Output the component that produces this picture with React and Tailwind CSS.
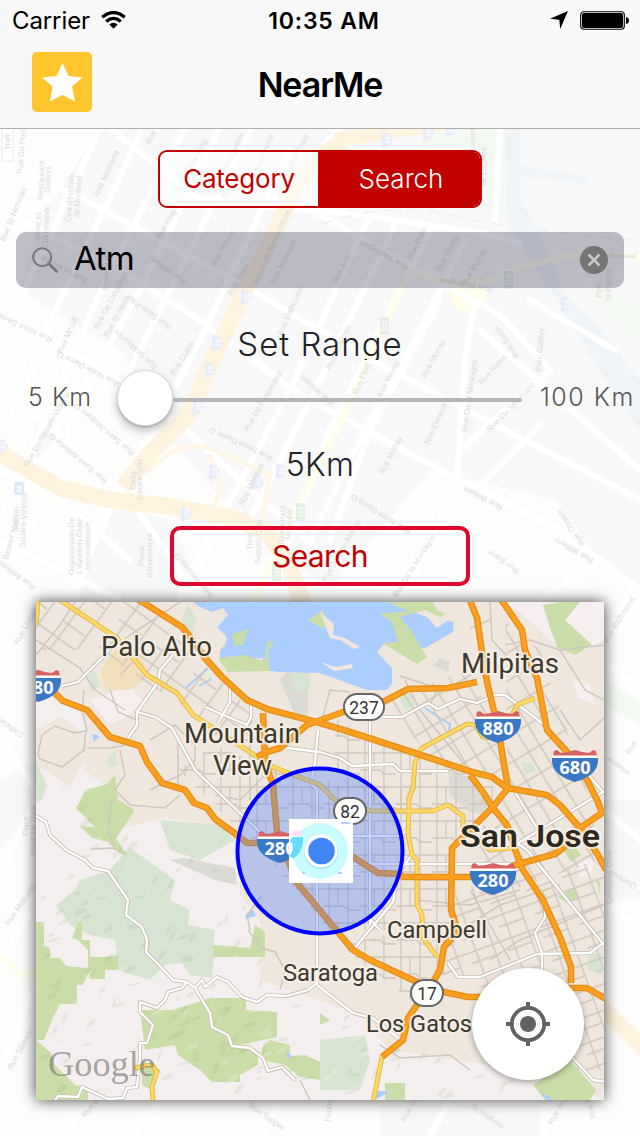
import React, { useState } from 'react';

// small seeded generator, keeps the terrain the same on every render
const makeRandom = (seed) => () => {
    seed = (seed * 16807) % 2147483647;
    return seed / 2147483647;
};

const backdropLabels = [
    [22, 174, -85, 'Rue Du Port'], [98, 197, -65, 'Rue Normand'], [150, 145, -65, 'Rue'], [192, 170, -62, 'Rue King'],
    [226, 172, -64, 'Rue Queen'], [258, 172, -66, 'Rue Prince'], [293, 168, -64, 'Rue Duke'], [5, 242, -68, 'Rue St-Nicholas'],
    [43, 200, -88, 'Restaurant'], [50, 193, -88, 'Galleys'], [71, 222, -86, "Cire d'histoire"], [79, 218, -86, 'de Montréal'],
    [40, 240, -88, 'Olive et'], [48, 247, -88, 'Gourmando'], [108, 290, -88, 'Federal Bar'],
    [160, 240, -60, 'Rue King'], [215, 267, -60, 'Rue Prince'], [257, 286, -66, 'Autoroute Bonaventure'], [274, 285, -62, 'Rue Nazareth'],
    [232, 296, -60, 'Rue Duke'], [88, 279, 208, 'Rue Le Moyne'], [187, 281, 216, 'Rue William'], [228, 192, 186, 'Rue Wellington'],
    [337, 284, -64, 'Rue Ann'], [412, 260, -64, 'Rue Peel'], [440, 272, -62, 'Rue Young'], [466, 286, -60, 'Rue Murray'],
    [409, 265, 208, 'Rue Wellington'], [493, 287, 190, 'Rue Wellington'], [637, 254, 180, 'Wellington'],
    [601, 298, -90, 'Parc'], [611, 302, -90, 'St-Patrick'], [486, 186, -90, 'de Lachine'], [475, 152, -90, 'Canada'],
    [53, 338, 205, 'Rue Notre Dame'], [62, 354, -66, 'Rue McGill'], [98, 330, -62, 'Rue De Longueuil'], [108, 338, -62, 'Rue St-Henri'],
    [158, 366, 222, 'Rue St-Maurice'], [174, 376, -58, 'Rue Dupré'], [172, 326, 216, 'Rue Saint-Paul'], [120, 382, 207, 'Rue Notre Dame O'],
    [135, 452, 220, 'Rue Saint-Jacques O'], [28, 467, -60, 'Rue Du Square-Victoria'], [108, 480, 220, 'Rue Saint-Antoine O'],
    [135, 490, -86, 'Delta'], [142, 500, -90, 'Centre-Ville'], [248, 432, -60, "Rue De l'Inspecteur"], [273, 456, 205, 'Rue Notre Dame O'],
    [282, 336, -66, 'Rue Dalhousie'], [335, 402, 220, 'Rue William'], [243, 506, -62, 'Rue Montfort'], [18, 532, -88, 'Station'],
    [25, 548, -88, 'Square-Victoria'], [74, 575, -90, 'Organisation De'], [82, 574, -90, "L'Aviation Civile"], [90, 570, -90, 'Internationale'],
    [144, 566, -90, 'Place'], [152, 578, -90, 'Bonaventure'], [36, 586, 216, 'Rue Belmont'], [8, 560, -75, 'Beaver Hall'],
    [252, 550, -88, 'Time'], [260, 564, -88, 'Supper Club'], [284, 545, -88, 'Restaurant'], [291, 540, -88, 'Montréal'],
    [326, 582, -60, 'Rue Jeanne-Mance'], [330, 370, -64, 'Rue Shannon'], [357, 395, -66, 'Rue Peel'], [382, 398, -64, 'Rue Young'],
    [426, 378, -62, 'Rue Murray'], [482, 385, -48, 'Rue Rioux'], [519, 356, 236, 'Rue Basin'], [541, 372, -86, 'Parc Gallery'],
    [467, 432, -82, 'Rue De la Montagne'], [490, 432, -46, 'Rue Du Séminaire'], [429, 445, -66, 'Rue Eleanor'], [383, 475, -62, 'Rue Murray'],
    [503, 506, 208, 'Rue William'], [585, 544, 235, 'Rue Ottawa'], [594, 559, 210, 'Rue William'], [520, 570, 215, 'Rue Barré'],
    [411, 530, 212, 'Rue Notre Dame O'], [397, 598, -58, 'Rue De la Montagne'], [214, 596, 230, 'Saint-Antoine O'],
    [18, 645, -60, 'Rue University'], [24, 734, 215, 'Cathcart'], [28, 836, -90, 'Place'], [35, 856, -90, 'Montréal Trust'],
    [9, 926, -56, 'Rue Metcalfe'], [12, 1070, -62, 'Rue Stanley'], [43, 1100, -60, 'Rue Drummond'], [85, 1118, -50, 'Rue de la Montagne'],
    [607, 644, -58, 'Rue Richmond'], [630, 755, -60, 'Rue'], [606, 760, 35, 'Avenue'], [612, 904, -90, 'Campbell Clive'],
    [637, 885, 210, 'Quesnel'], [248, 1107, 35, 'Rue Tupper'], [330, 1122, -84, 'Faubourg'], [405, 1122, -60, 'Rue Guy'],
    [470, 1107, 35, 'St-Mathieu'], [552, 1125, -60, 'Rue Seymour'], [596, 1118, -105, 'Rue René-Lévesque'],
];

const backdropBadges = [
    [387, 140, '10'], [428, 133, '10'], [451, 129, '10'], [283, 188, '10'], [246, 297, '10'], [217, 343, '10'], [210, 370, '10'],
    [198, 407, '10'], [214, 472, '10'], [257, 482, '10'], [281, 471, '10'], [186, 514, '720'], [566, 304, '10'], [2, 446, '10'],
];

const Backdrop = () => (
    <svg className="absolute inset-0 h-full w-full" viewBox="0 0 640 1136" fontFamily="Liberation Sans, sans-serif">
        <rect width="640" height="1136" fill="#fdfdfb" />
        <g fill="#f8f8f8">
            <path d="M100 128L340 128L520 128H640V590L600 560L555 500L430 470L330 590L240 520L170 440L120 350L20 290L40 220Z" />
            <path d="M116 505L170 520L190 560L175 600H80L90 560Z" />
            <path d="M0 780L36 760V820L0 850ZM604 800H640V900H604ZM380 1105H540V1136H380Z" />
        </g>
        <path d="M420 147L443 128H505L508 218L483 213V147ZM515 325L553 365L540 375L520 345ZM580 270L640 310V350L600 310ZM36 420L50 410L55 440L36 460ZM604 680L640 700V725L604 705Z" fill="#f5f9f3" />
        <path d="M505 128H520V165L587 176V184L520 176V200L532 217L568 300L593 320L640 380V430L593 360L557 300L508 227Z" fill="#eff4f8" />
        <circle cx="468" cy="294" r="18" fill="#fefeea" />

        {/* city streets */}
        <g fill="none" stroke="#ffffff" strokeWidth="6" strokeLinejoin="round" strokeLinecap="round">
            <path d="M0 160L75 195L225 275L390 370L640 500" />
            <path d="M110 128L200 200L360 215L480 233L520 243" />
            <path d="M320 215L500 315L550 370L460 450" />
            <path d="M0 210L120 270L200 320L300 395L450 475L560 530L640 590" />
            <path d="M0 315L110 375L180 425L240 480L330 560L400 600" />
            <path d="M0 390L60 435L130 500L200 600M0 470L60 500L130 560" />
            <path d="M640 470L480 330M540 425L480 485M475 300L465 360L457 480L440 520L400 600" />
            <path d="M100 128L20 300L0 340M140 135L60 300L10 420M185 128L110 270L40 430L0 520" />
            <path d="M220 128L145 280L85 390L15 560M252 128L190 250L115 400M290 150L195 350L100 530L70 600" />
            <path d="M370 215L285 400L230 500L180 600M395 225L330 360L260 500L210 600" />
            <path d="M430 230L380 330L330 430L270 590M465 240L420 330L370 420L320 520L280 600" />
            <path d="M340 128L320 150M440 300L370 430L330 540M500 128L495 220M530 300L615 350" />
            <path d="M0 540L60 570L120 600M540 600L600 560M0 740L36 790M36 800L0 870M0 960L40 900M0 1080L36 980M604 640L640 600M604 660L640 690M604 810L640 840M604 900L640 930" />
            <path d="M60 1136L90 1100M130 1136L160 1100M260 1136L280 1100M430 1136L450 1100M540 1136L560 1100M0 1136L40 1090" />
        </g>
        <g fill="none" stroke="#fef3df" strokeWidth="17" strokeLinejoin="round">
            <path d="M335 140L443 124" strokeWidth="14" />
            <path d="M345 142Q315 155 295 187L277 227L240 300L217 350L187 417L147 457L123 487" />
            <path d="M-5 450L20 465L60 488L110 500L173 507L233 518L267 532L290 567L305 610" />
            <path d="M600 1005L650 1055" />
        </g>
        <g fill="none" stroke="#fef7e8" strokeWidth="5">
            <path d="M145 475Q180 435 215 450L270 475L262 520M210 455L220 490L212 515" />
        </g>
        <g fill="none" stroke="#fefeec" strokeWidth="6">
            <path d="M640 257L580 253L520 267L467 290L410 270L370 357L340 423L315 470L250 610M0 955L22 975L40 970" />
        </g>
        <path d="M320 225Q390 200 450 215T640 240" fill="none" stroke="#f0f0f0" strokeWidth="2" strokeDasharray="12 10" />
        <rect x="2" y="118" width="11" height="43" fill="#fff" stroke="#ececec" />
        <text transform="translate(10 150) rotate(-90)" fontSize="8" fill="#d6d6d6">Trafi</text>

        {backdropBadges.map(([x, y, label], index) => (
            <g key={index} transform={`translate(${x} ${y}) rotate(-88)`}>
                <path d="M-8 -5H8L6 2L0 6L-6 2Z" fill="#e9edfa" />
                <text textAnchor="middle" y="3" fontSize="7" fontWeight="bold" fill="#fff">{label}</text>
            </g>
        ))}
        {[[508, 280], [384, 326], [300, 512], [276, 572]].map(([x, y]) => (
            <g key={x} transform={`translate(${x} ${y}) rotate(-90)`}>
                <rect x="-9" y="-4" width="18" height="9" fill="#e4f0e4" />
                <text textAnchor="middle" y="3" fontSize="7" fontWeight="bold" fill="#fff">112</text>
            </g>
        ))}
        <rect x="14" y="482" width="10" height="13" rx="2" fill="#dfeaf7" />
        <text transform="translate(22 492) rotate(-90)" fontSize="8" fontWeight="bold" fill="#fff">M</text>
        {backdropLabels.map(([x, y, angle, label], index) => (
            <text key={index} transform={`translate(${x} ${y}) rotate(${angle})`} fontSize="8" fill="#dcdcdc">{label}</text>
        ))}
    </svg>
);

const highways = [
    'M136 598L182 627L190 637L205 658L222 677L247 700L267 709L320 723L350 732L430 758L472 772L492 777L507 788L547 795L560 805L580 828L598 855L606 870',
    'M55 693L63 701L87 710L110 737L140 746L147 762L162 783L185 790L194 803L207 808L215 819L237 835L247 843H300L353 857L378 873L400 874L403 877H492L515 865L555 854L563 848L580 828L602 813L598 802L587 780L567 752L547 730L537 678L525 650L522 630L500 598',
    'M263 713L265 762L273 785L277 832L297 883L342 937L353 950L370 960L417 982L444 992L468 997H500L572 988H587L606 999',
    'M257 757L267 752L280 748L307 725L343 712L383 702L408 689L448 688L477 682',
    'M469 598L477 618L482 652L487 682L498 728L508 788L493 807L472 828L452 848L451 910L456 925V933L444 947L440 970L433 982L408 1018L403 1040L382 1057',
    'M470 775L483 792L493 808L507 825L517 855L523 870L543 900L560 937L571 967V983',
];

const mainRoads = [
    'M57 598L117 638L147 675L177 693L193 715L273 767L320 785L337 802L372 811H433L448 805L463 816V828L490 850L512 848',
    'M535 698L517 705L512 715L498 738L483 737L475 725L467 724L422 748L415 762L413 788L409 798L408 835L412 855L417 860V905L422 915L423 938L437 957',
    'M38 598L36 625',
    'M382 1057L373 1102',
    'M135 1068L152 1065L157 1072L152 1087L153 1102',
];

const whiteRoads = [
    'M62 686L78 682L105 655L112 645',
    'M173 655L160 670L158 682L137 712V725L128 738',
    'M137 712L155 717L172 728L195 770L242 815L260 832',
    'M205 707L247 725L251 717V697M230 683V702L218 723',
    'M36 816L46 822L50 835L66 850L85 860L93 868L108 871L128 900L126 915L142 927L147 940L146 952L157 963L173 980L187 982L195 988L210 1013L212 1027L228 1035L232 1046L250 1048L263 1058L268 1071L282 1067L295 1080',
    'M195 988L202 980L205 987L217 977L228 982L242 997L257 1002L267 995L287 996L308 990L317 983V790L311 783L315 762L318 730',
    'M187 982L182 988L168 992L165 1000L157 1008L140 1002V1012L153 1025L147 1043H140V1057L137 1087L127 1088L123 1098L108 1099L82 1087L78 1097L58 1096L54 1102',
    'M287 748L320 752L340 758L352 766L393 764L400 771H448',
    'M383 717H402L428 703L438 709L460 699L477 703L495 695H505L542 723L563 745L603 792L518 843',
    'M370 717V925M515 792L537 828M517 843L527 850L604 945M403 864H513M317 836H400L412 826M335 864H403',
    'M448 963L458 977H480L537 954L590 953L606 941',
    'M317 985L353 1013L373 1018L398 1038',
    'M353 950L393 902L398 873L412 855M368 917L380 930',
    'M573 1058L593 1080L606 1082',
    'M540 890L545 900V917L535 933L542 953V975',
];

// [polygon, pattern]: areas covered by a regular street grid
const streetGrids = [
    ['M36 602H140L250 710L262 760L215 735L175 700L140 680L100 650L36 650Z', 'streets-slant'],
    ['M178 770L215 745L275 770L320 780L410 790V930L330 930L270 860L240 830Z', 'streets-square'],
    ['M335 720L430 758L500 790L455 850V945L410 1000L340 945L410 930V815L335 790Z', 'streets-square'],
    ['M380 700L470 670L500 740L505 780L430 755Z', 'streets-steep'],
    ['M505 620L540 650L590 800L600 860L480 900L480 830L508 790Z', 'streets-steep'],
    ['M455 890L604 860V1070H560L470 975H440Z', 'streets-slant-dense'],
];

const terrainGreens = [
    'M78 805L85 790L105 785L115 775L118 800L135 810L115 840L108 830L100 833L88 820L76 808Z',
    'M80 826L95 827L102 820L115 824L117 840L128 857L118 852L108 842L92 838Z',
    'M36 922H44V946L50 948V958H60L66 966L88 968V950L78 940L72 938L78 922H82V940H90V957H105L118 955V970H105V979H90V972L82 985H77V1004H60L52 1020L44 1040L36 1040Z',
    'M213 945L250 948L255 925L265 932V957H213Z',
    'M140 1010L172 1010L195 1003L210 998H246V1010L277 1012V1037L240 1045L258 1052V1065L240 1075V1082H212L200 1070L178 1055L175 1045L145 1050Z',
    'M262 1048L270 1040L290 1045V1056L305 1055L320 1062V1080L300 1077L285 1065L262 1060Z',
    'M36 1040L50 1052L55 1065L75 1085L88 1087V1100H36Z', 'M142 1060L160 1070L152 1090L142 1085Z',
    'M543 605L560 602H580L565 620L592 645L575 655L558 648L550 628Z', 'M562 848L572 842L581 855L571 862Z',
    'M558 897L575 887L580 898L568 903Z M593 877L600 882V895L598 885Z',
    'M533 1085L570 1060L596 1090L590 1100H545Z', 'M320 1013L330 1020L320 1025ZM385 1083H405V1100H385Z',
];

const paleGreens = [
    'M188 604L197 620L190 640L182 620ZM87 677L95 670L100 685L92 693ZM107 760L115 750L117 765L110 768Z',
    'M56 905L75 890L80 880L108 871L130 848L175 880L170 900L190 910L188 925L215 930L212 960L165 965L150 980L118 970L115 940L90 935L70 925Z',
    'M36 762L47 785L42 800L36 803ZM160 820L220 825L235 840L200 860L170 850ZM290 670H310V690L295 692Z',
    'M520 760L532 765L537 770L525 775ZM400 697L412 692L415 705L405 711ZM588 955L603 953V975L588 970Z',
    'M320 1040L365 1035L370 1060L360 1090H320ZM180 960L215 950L212 978L190 975Z',
];

const cities = [
    ['Palo Alto', 101, 656, 28, 111], ['Mountain', 184, 743, 28, 116], ['View', 213, 775, 28, 59], ['Milpitas', 461, 673, 27, 98],
    ['Campbell', 387, 938, 24, 100], ['Saratoga', 283, 981, 23, 95], ['Los Gatos', 366, 1032, 24, 106],
];

const InterstateShield = ({ x, y, label }) => (
    <g transform={`translate(${x} ${y})`}>
        <path d="M2 1L5 0L9 3L16 2L23 0L30 2L37 3L41 0L44 1L45 6H1Z" fill="#d86263" />
        <path d="M1 5.5H45V9H1Z" fill="#fff" />
        <path d="M0 8H46C47 22 36 28 23 32C10 28 -1 22 0 8Z" fill="#3a78c6" />
        <text x="23" y="24" textAnchor="middle" fontFamily="Open Sans, sans-serif" fontSize="18" fontWeight="700" fill="#fff" textLength="31" lengthAdjust="spacingAndGlyphs">{label}</text>
    </g>
);

const RouteBadge = ({ x, y, width, label }) => (
    <g transform={`translate(${x} ${y})`}>
        <rect x="1" y="1" width={width - 2} height="26" rx="13" fill="#fff" stroke="#666" strokeWidth="2" />
        <text x={width / 2} y="20.5" textAnchor="middle" fontFamily="Roboto, sans-serif" fontSize="19" fill="#333" textLength={label.length * 10 - 0.5} lengthAdjust="spacingAndGlyphs">{label}</text>
    </g>
);

const Terrain = () => {
    const random = makeRandom(71);
    return (
        <g clipPath="url(#hills)">
            {Array.from({ length: 520 }, (_, index) => {
                const x = 36 + random() * 568;
                const y = 770 + random() * 330;
                const w = 4 + random() * 10;
                const h = 3 + random() * 8;
                return (
                    <path
                        key={index}
                        d={`M${x} ${y}q${w * 0.4} ${-h} ${w} ${-h}q${w * 0.1} ${h * 0.8} ${-w} ${h}z`}
                        fill={index % 4 === 0 ? '#ffffff' : '#7c9a62'}
                        opacity={index % 4 === 0 ? 0.18 : 0.12}
                    />
                );
            })}
        </g>
    );
};

const AreaMap = () => (
    <svg className="block h-full w-full" viewBox="36 602 568 498">
        <defs>
            <pattern id="streets-square" width="36" height="34" patternUnits="userSpaceOnUse">
                <path d="M0 5H36M5 0V34M0 22H20L24 26H36M24 0V34M14 5V22" fill="none" stroke="#cfc7be" strokeWidth="1.3" />
            </pattern>
            <pattern id="streets-slant" width="46" height="34" patternUnits="userSpaceOnUse" patternTransform="rotate(36)">
                <path d="M0 6H46M8 0V34M0 23H28M30 0V34" fill="none" stroke="#cfc7be" strokeWidth="1.5" />
            </pattern>
            <pattern id="streets-slant-dense" width="38" height="25" patternUnits="userSpaceOnUse" patternTransform="rotate(-20)">
                <path d="M0 6H38M8 0V25M0 17H26M26 0V25" fill="none" stroke="#cfc7be" strokeWidth="1.4" />
            </pattern>
            <pattern id="streets-steep" width="30" height="24" patternUnits="userSpaceOnUse" patternTransform="rotate(-31)">
                <path d="M0 5H30M6 0V24M19 0V24" fill="none" stroke="#cfc7be" strokeWidth="1.5" />
            </pattern>
            <clipPath id="hills">
                <path d="M36 780L90 790L120 830L170 850L240 860L250 940L290 990L360 1015L400 1050L470 1060L560 1080L604 1100H36Z" />
            </clipPath>
        </defs>
        <rect x="36" y="602" width="568" height="498" fill="#efe7de" />
        <path d="M36 690L80 712L88 735L84 770L105 785L120 800L118 830L160 818L215 825L240 850V895L260 920V980L290 990L360 1015L390 1050L470 1062L560 1080L604 1100H36V800L45 782L36 762Z" fill="#f5eeee" />
        <path d="M36 730L62 716L84 735L92 750L80 768L70 787L36 765Z" fill="#efe7de" />
        <path d="M500 602H604V640L575 655L550 640L520 612ZM90 700L130 685L142 700L130 715L110 725ZM570 602L604 602V640L585 645ZM573 680L590 685L595 705L577 697ZM578 862L596 858L590 875L580 878Z" fill="#f6eeef" />
        <path d="M100 670L115 650L140 655L150 675L130 690L105 690Z" fill="#f1dfbc" />
        <path d="M448 770L470 778L485 800L490 815L470 812L450 795ZM280 680L290 668L308 685V720L295 715ZM433 665L440 658L450 662L448 672ZM170 860L185 858L235 868L237 885L215 880Z" fill="#dcdad4" />
        {paleGreens.map((d) => <path key={d} d={d} fill="#d7e4d2" />)}
        {terrainGreens.map((d) => <path key={d} d={d} fill="#cadda8" />)}
        <Terrain />

        {/* bay */}
        <path d="M193 602L200 607L212 612L223 608L228 615L217 627L227 637L225 645L220 650V658L263 658V670L280 672L320 673L353 685L367 690H387L392 683V668L377 652L385 643L425 648L453 632L454 622L447 621L437 628L427 617L413 612L387 602Z" fill="#acceff" />
        <path d="M387 602H433L437 610L445 614L440 617L425 610L400 617L412 632L427 657L417 664L382 643L398 642L392 622L380 614L408 611Z" fill="#cadda8" />
        <path d="M218 658L245 655L264 661L268 641L274 642L268 652L270 671L228 672ZM232 634L248 629L243 645L235 646ZM308 620L323 610L330 628L320 627Z" fill="#cadda8" />
        <path d="M320 612L334 624L333 635L345 638L360 647L354 649L340 640L330 638ZM320 662L336 667L352 664L353 668L335 671Z" fill="#efe7de" />
        <path d="M225 625L233 631L226 637M186 688L208 668M199 686L211 679M425 708L440 718L450 724L449 732" fill="none" stroke="#a9cdfb" strokeWidth="2" />
        <path d="M92 734L100 736L94 742ZM245 917L252 909L256 916L246 919ZM287 1052L293 1057L287 1058ZM375 1090L389 1092L375 1100ZM541 1092L550 1097V1100H546Z" fill="#a9cdfb" />

        {/* minor streets */}
        {streetGrids.map(([d, pattern]) => <path key={d} d={d} fill={`url(#${pattern})`} />)}
        <g fill="none" stroke="#cfc7be" strokeWidth="1.5">
            <path d="M38 754L42 735L55 726L75 733L86 731L84 750L62 767L40 759Z" />
            <path d="M150 790L180 775L195 760V745L175 725L150 740M120 750L125 775L115 790L130 805L165 808L180 795M112 800L108 830L115 850" />
            <path d="M36 640L80 668L95 690L125 710M92 665L130 635L180 602M110 690L118 712L137 720M120 675L140 655M88 748L110 748L125 745" />
            <path d="M36 655L60 625L75 602M84 690L82 710L87 731" />
            <path d="M120 850L113 848L90 849M248 930L262 948L275 952L285 970L280 990M250 930L247 915L262 895M275 765L240 800L215 795M178 740V790M198 740H250V800" />
            <path d="M490 602L492 640L506 655M470 628L490 620M505 645L530 640L560 650L604 645M560 650L585 690L604 700M604 718L580 740L560 710" />
            <path d="M400 676L438 688L430 705M350 692L330 690L322 720M405 680L420 710L465 765M380 1045L400 1058L450 1055L470 1070M300 1080L310 1100" />
            <path d="M415 880H450M415 900L470 905L520 890M460 930L500 905L560 885M490 960L520 940L604 905M560 990L555 1050M470 890L510 960" />
        </g>

        <g fill="none" strokeLinejoin="round">
            {whiteRoads.map((d) => <path key={d} d={d} stroke="#c6beb4" strokeWidth="4" />)}
            {whiteRoads.map((d) => <path key={d} d={d} stroke="#ffffff" strokeWidth="2.3" />)}
            {mainRoads.map((d) => <path key={d} d={d} stroke="#e0ba50" strokeWidth="5" />)}
            {mainRoads.map((d) => <path key={d} d={d} stroke="#fed863" strokeWidth="3" />)}
            {highways.map((d) => <path key={d} d={d} stroke="#e58f18" strokeWidth="6.6" />)}
            {highways.map((d) => <path key={d} d={d} stroke="#fb9f20" strokeWidth="4" />)}
        </g>

        <circle cx="320" cy="851" r="82.5" fill="#4a7aff" fillOpacity="0.33" />

        <g fontFamily="Roboto, sans-serif" fill="#3e382c" stroke="#f5f0e8" strokeOpacity="0.85" strokeWidth="4" strokeLinejoin="round" paintOrder="stroke">
            {cities.map(([name, x, y, size, width]) => (
                <text key={name} x={x} y={y} fontSize={size} textLength={width} lengthAdjust="spacingAndGlyphs">{name}</text>
            ))}
            <text x="460" y="847" fontSize="31" fontWeight="600" fill="#2d281e" textLength="140" lengthAdjust="spacingAndGlyphs">San Jose</text>
        </g>
        <text x="48" y="1076" fontFamily="Liberation Serif, serif" fontSize="36" fill="#777" fillOpacity="0.65" textLength="107" lengthAdjust="spacingAndGlyphs">Google</text>

        <InterstateShield x={15} y={670} label="280" />
        <InterstateShield x={475} y={711} label="880" />
        <InterstateShield x={552} y={750} label="680" />
        <InterstateShield x={470} y={863} label="280" />
        <InterstateShield x={257} y={831} label="280" />
        <RouteBadge x={343} y={693} width={42} label="237" />
        <RouteBadge x={333} y={797} width={34} label="82" />
        <RouteBadge x={410} y={979} width={34} label="17" />

        <circle cx="320" cy="851" r="82.5" fill="none" stroke="#0000ff" strokeWidth="4" />

        {/* current position */}
        <rect x="289" y="819" width="64" height="64" fill="#fff" />
        <circle cx="320" cy="851" r="28" fill="#c8fcff" />
        <path d="M293 831H302V836H293Z" fill="#fbdcfb" />
        <path d="M292 837H303C303 848 300 854 294 858L290 857V842Z" fill="#68dcff" />
        <path d="M289 842C294 840 294 854 289 855Z" fill="#fff" />
        <path d="M341 822H350V824H341ZM302 872H305V874H302ZM338 872H342V874H338Z" fill="#b9cdf5" />
        <circle cx="321" cy="852" r="17" fill="#7ccde8" opacity="0.5" />
        <circle cx="321" cy="851" r="16.5" fill="#fff" />
        <circle cx="321.500" cy="851" r="13.300" fill="#4285f4" />
    </svg>
);

const StatusBar = () => (
    <div className="relative flex h-10 items-center justify-between pl-3 pr-[11px] text-black">
        <div className="flex items-center gap-[11px] pt-0.5">
            <span className="text-[24px] leading-none tracking-[-0.1px]">Carrier</span>
            <svg className="-mt-0.5 h-[18px] w-[25px]" viewBox="0 0 25 18">
                <g fill="none" stroke="#000" strokeWidth="3.200">
                    <path d="M1.200 6.200Q12.500 -3.200 23.800 6.200" />
                    <path d="M5.200 10.400Q12.500 4.300 19.800 10.400" />
                </g>
                <path d="M8.300 13.400Q12.500 10 16.700 13.400L12.500 17.700Z" />
            </svg>
        </div>
        <div className="absolute inset-x-0 top-[9px] pl-[8px] text-center text-[23px] font-semibold leading-6 tracking-[0.8px]">10:35 AM</div>
        <div className="flex items-center gap-3">
            <svg className="h-[18px] w-[18px]" viewBox="0 0 18 18">
                <path d="M18 0L10.200 18L9.300 8.800L0 7.800Z" />
            </svg>
            <svg className="h-[19px] w-[49px]" viewBox="0 0 49 19">
                <rect x="0.700" y="0.700" width="43.600" height="17.600" rx="3" fill="none" stroke="#000" strokeWidth="1.100" />
                <rect x="2" y="2" width="41" height="15" rx="2" />
                <path d="M46 6Q49 6.500 49 9.500T46 13Z" />
            </svg>
        </div>
    </div>
);

const Header = () => (
    <header className="h-[129px] border-b border-[#b0b0b0] bg-[#f8f8f9]">
        <StatusBar />
        <div className="grid grid-cols-[60px_1fr_60px] items-center px-8 pt-3">
            <button className="flex h-[60px] w-[60px] items-center justify-center rounded-[5px] bg-[#ffc52c]">
                <svg className="h-[60px] w-[60px]" viewBox="0 0 60 60">
                    <path d="M30.500 11L36.500 24L50.500 25.500L40 34.500L43 49.500L30.500 43L18 49.500L20.500 34.500L10 25.500L24.500 24Z" fill="#fff" />
                </svg>
            </button>
            <h1 className="pt-1.5 text-center text-[34px] font-semibold leading-10 tracking-[-1.1px]">NearMe</h1>
        </div>
    </header>
);

const App = () => {
    const [mode, setMode] = useState('search');
    const [query, setQuery] = useState('Atm');
    const range = 5;

    return (
        <div className="relative h-[1136px] w-[640px] overflow-hidden bg-[#fcfcfb] font-['Inter',sans-serif]">
            <Backdrop />
            <div className="relative flex h-full flex-col">
                <Header />

                <main className="flex flex-col">
                    <div className="mx-auto mt-[21px] flex h-[58px] w-[324px] overflow-hidden rounded-[9px] border-2 border-[#c10000] text-[26px]">
                        <button
                            onClick={() => setMode('category')}
                            className={`w-[158px] pb-0.5 tracking-[-0.2px] ${mode === 'category' ? 'bg-[#c10000] text-white' : 'bg-white/50 text-[#c10000]'}`}
                        >
                            Category
                        </button>
                        <button
                            onClick={() => setMode('search')}
                            className={`flex-1 pb-0.5 pl-1 font-light ${mode === 'search' ? 'bg-[#c10000] text-white' : 'bg-white/50 text-[#c10000]'}`}
                        >
                            Search
                        </button>
                    </div>

                    <div className="mx-4 mt-6 flex h-14 items-center rounded-[10px] bg-[#2b2b4b]/30 pl-4 pr-4">
                        <svg className="h-[26px] w-[27px] shrink-0" viewBox="0 0 27 26" fill="none" stroke="#777">
                            <circle cx="10.200" cy="10.200" r="9" strokeWidth="2" />
                            <path d="M17 17L25.500 25" strokeWidth="3" />
                        </svg>
                        <input
                            value={query}
                            onChange={(e) => setQuery(e.target.value)}
                            className="ml-[15px] h-12 min-w-0 flex-1 bg-transparent pb-0.5 text-[33px] tracking-[-0.6px] text-black outline-none"
                        />
                        <button className="shrink-0" onClick={() => setQuery('')}>
                            <svg className="h-7 w-7" viewBox="0 0 28 28">
                                <circle cx="14" cy="14" r="14" fill="#757575" />
                                <path d="M8.500 8.500L19.500 19.500M19.500 8.500L8.500 19.500" stroke="#c6c6cc" strokeWidth="2.600" />
                            </svg>
                        </button>
                    </div>

                    <div className="mt-[36px] h-9 overflow-hidden text-center text-[33px] font-light leading-[40px] tracking-[1px] text-[#222227]">Set Range</div>

                    <div className="mt-[10px] flex h-14 items-center text-[25px] font-light text-[#555]">
                        <span className="w-[117px] pl-7 tracking-[1.1px]">5 Km</span>
                        <div className="flex w-[405px] items-center">
                            <div className="h-14 w-14 rounded-full border border-[#ddd] bg-white shadow-[0_5px_10px_rgba(0,0,0,0.25),0_1px_2px_rgba(0,0,0,0.25)]" />
                            <div className="mt-1 h-1 flex-1 rounded-r-full bg-[#b5b5b5]" />
                        </div>
                        <span className="pl-[18px] tracking-[1.5px]">100 Km</span>
                    </div>

                    <div className="mt-[19px] h-10 text-center text-[32px] font-light leading-10 tracking-[0.3px] text-[#222227]">{range}Km</div>

                    <button className="mx-auto mt-[41px] h-[60px] w-[300px] rounded-[10px] border-4 border-[#dc082d] text-[30px] tracking-[-0.6px] text-[#c10000]">
                        Search
                    </button>

                    <section className="relative mx-9 mt-4 h-[498px] shadow-[0_0_14px_rgba(0,0,0,0.75)]">
                        <AreaMap />
                        <button className="absolute bottom-5 right-5 flex h-28 w-28 items-center justify-center rounded-full bg-white shadow-[0_2px_6px_rgba(0,0,0,0.35)]">
                            <svg className="h-11 w-11" viewBox="0 0 44 44">
                                <circle cx="22" cy="22" r="16.200" fill="none" stroke="#616161" strokeWidth="3.800" />
                                <circle cx="22" cy="22" r="8" fill="#616161" />
                                <path d="M22 0V6M22 38V44M0 22H6M38 22H44" stroke="#616161" strokeWidth="4" />
                            </svg>
                        </button>
                    </section>
                </main>
            </div>
        </div>
    );
};

export default App;
